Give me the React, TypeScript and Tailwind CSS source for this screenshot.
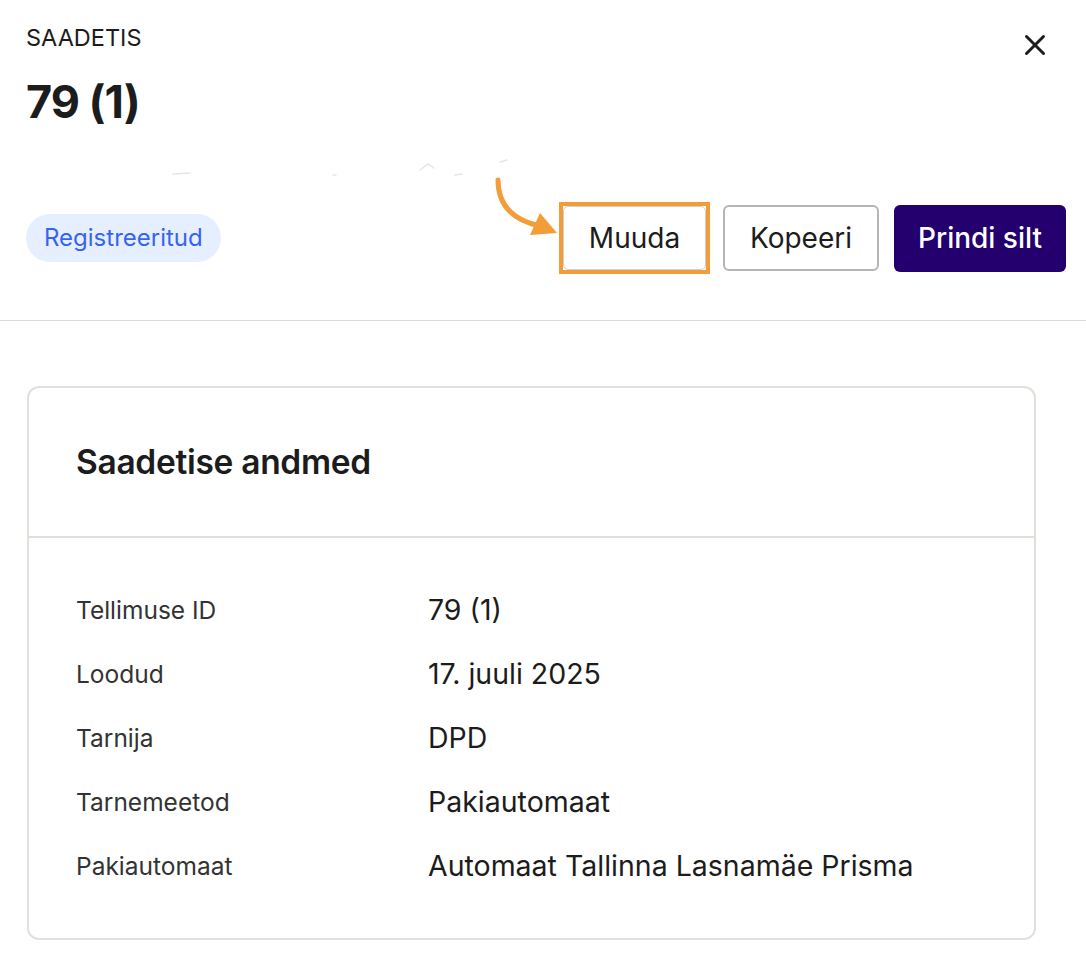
import { X } from 'lucide-react';

const rows = [
    { label: 'Tellimuse ID', value: '79 (1)' },
    { label: 'Loodud', value: '17. juuli 2025' },
    { label: 'Tarnija', value: 'DPD' },
    { label: 'Tarnemeetod', value: 'Pakiautomaat' },
    { label: 'Pakiautomaat', value: 'Automaat Tallinna Lasnamäe Prisma' },
];

export default function App() {
    return (
        <div className="w-[1086px] h-[968px] bg-white text-[#1c1c1c] font-['Inter',sans-serif] relative overflow-hidden">
            {/* header */}
            <div className="px-[26px] pt-[24px] border-b border-[#dddbd8] h-[321px] relative">
                <div className="flex items-start justify-between">
                    <div>
                        <div className="text-[23.5px] leading-[28px]">SAADETIS</div>
                        <div className="mt-[24px] text-[45px] leading-[52px] font-bold tracking-[-1px]">79 (1)</div>
                    </div>
                    <button className="mt-[4px] mr-[8px] text-[#1c1c1c]">
                        <X size={34} strokeWidth={2.1} />
                    </button>
                </div>

                {/* faint smudges */}
                <svg className="absolute left-0 top-0 pointer-events-none" width="1086" height="321">
                    <g stroke="#e6e6e6" strokeWidth="1.5" strokeLinecap="round" fill="none">
                        <path d="M173 174 L190 173" />
                        <path d="M333 175 L336 175" />
                        <path d="M420 170 L428 164 L434 168" />
                        <path d="M455 175 L462 174" />
                        <path d="M500 162 L507 160" />
                    </g>
                    <path d="M498 180 C 498 205, 512 220, 540 226" stroke="#f29d38" strokeWidth="5" fill="none" strokeLinecap="round" />
                    <polygon points="540,213 557,233 530,235" fill="#f29d38" />
                </svg>

                <div className="mt-[74px] flex items-center justify-between">
                    <span className="h-[48px] px-[18px] rounded-full bg-[#e6efff] text-[#3763f2] text-[24px] flex items-center">
                        Registreeritud
                    </span>
                    <div className="flex items-center gap-[13px] mr-[-6px]">
                        <div className="border-[4px] border-[#f29d38]">
                            <button className="w-[143px] h-[64px] rounded-[5px] border border-[#d0d0d0] bg-white text-[28px]">
                                Muuda
                            </button>
                        </div>
                        <button className="w-[156px] h-[66px] rounded-[6px] border-2 border-[#b5b5b5] bg-white text-[28px]">
                            Kopeeri
                        </button>
                        <button className="ml-[2px] w-[172px] h-[67px] rounded-[6px] bg-[#23006d] text-white text-[28px] font-medium">
                            Prindi silt
                        </button>
                    </div>
                </div>
            </div>

            {/* card */}
            <div className="pt-[65px] px-[27px]">
                <div className="w-[1009px] h-[554px] border-2 border-[#e3e0dc] rounded-[12px]">
                    <div className="h-[150px] border-b-2 border-[#e3e0dc] px-[47px] flex items-center">
                        <h2 className="font-semibold text-[33.5px] tracking-[-0.3px] text-[#1c1c1c]">
                            Saadetise andmed
                        </h2>
                    </div>
                    <div className="px-[47px] pt-[52px] flex flex-col gap-[24px]">
                        {rows.map(r => (
                            <div key={r.label} className="flex items-center h-[40px]">
                                <span className="w-[352px] text-[24.5px] text-[#333]">{r.label}</span>
                                <span className="text-[28.5px] text-[#1c1c1c]">{r.value}</span>
                            </div>
                        ))}
                    </div>
                </div>
            </div>
        </div>
    );
}
